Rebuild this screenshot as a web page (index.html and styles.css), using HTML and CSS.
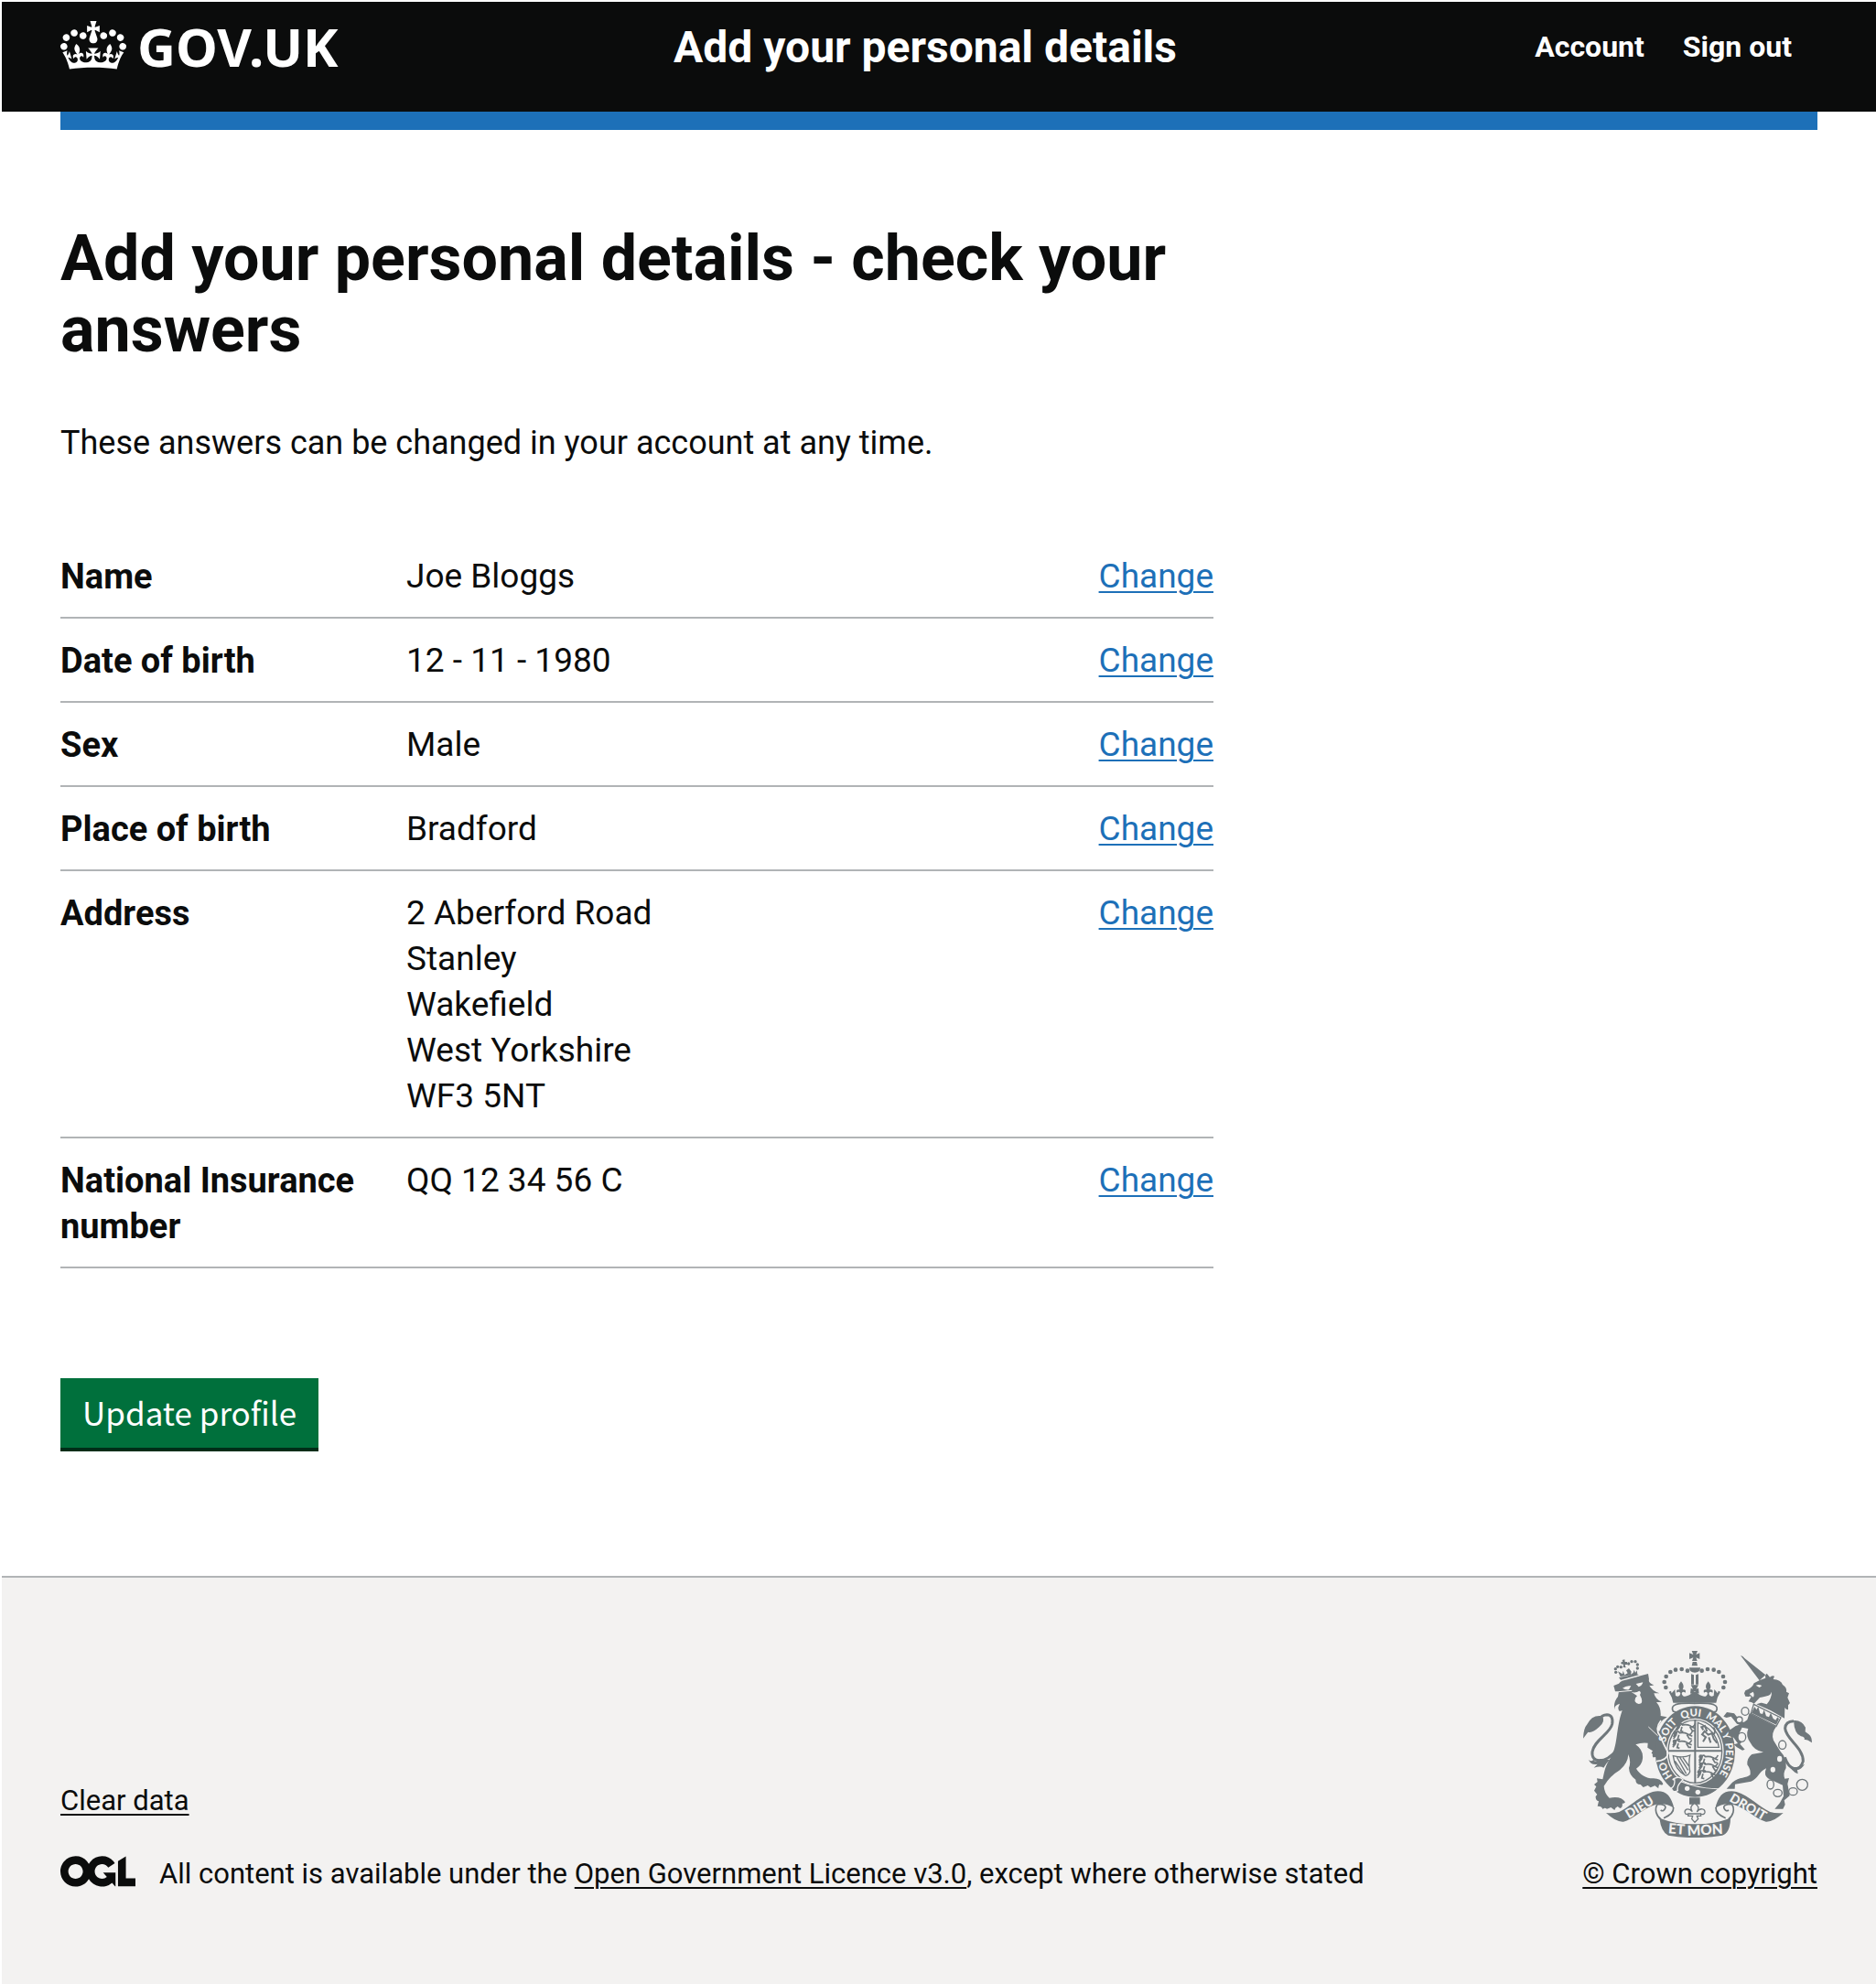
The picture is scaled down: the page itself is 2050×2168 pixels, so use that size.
FILE: index.html
```html
<!DOCTYPE html>
<html lang="en">
<head>
<meta charset="utf-8">
<meta name="viewport" content="width=device-width, initial-scale=1">
<title>Add your personal details - check your answers</title>
<link rel="stylesheet" href="styles.css">
</head>
<body>
<header class="header">
  <div class="container header-grid">
    <a class="logo" href="#">
      <svg class="logo-crown" viewBox="0 0 132 97" aria-hidden="true"><path fill="currentColor" fill-rule="evenodd" d="M25 30.2c3.5 1.5 7.7-.2 9.1-3.7 1.5-3.6-.2-7.8-3.9-9.2-3.6-1.4-7.6.3-9.1 3.9-1.4 3.5.3 7.5 3.9 9zM9 39.5c3.6 1.5 7.8-.2 9.2-3.7 1.5-3.6-.2-7.8-3.9-9.1-3.6-1.5-7.6.2-9.1 3.8-1.4 3.5.3 7.5 3.8 9zM4.4 57.2c3.5 1.5 7.7-.2 9.1-3.8 1.5-3.6-.2-7.7-3.9-9.1-3.5-1.5-7.6.3-9.1 3.8-1.4 3.5.3 7.6 3.9 9.1zm38.3-21.4c3.5 1.5 7.7-.2 9.1-3.8 1.5-3.6-.2-7.7-3.9-9.1-3.6-1.5-7.6.3-9.1 3.8-1.3 3.6.4 7.7 3.9 9.1zm64.4-5.6c-3.6 1.5-7.8-.2-9.1-3.7-1.5-3.6.2-7.8 3.8-9.2 3.6-1.4 7.7.3 9.2 3.9 1.3 3.5-.4 7.5-3.9 9zm15.9 9.3c-3.6 1.5-7.7-.2-9.1-3.7-1.5-3.6.2-7.8 3.7-9.1 3.6-1.5 7.7.2 9.2 3.8 1.5 3.5-.3 7.5-3.8 9zm4.7 17.7c-3.6 1.5-7.8-.2-9.2-3.8-1.5-3.6.2-7.7 3.9-9.1 3.6-1.5 7.7.3 9.2 3.8 1.3 3.5-.4 7.6-3.9 9.1zM89.3 35.8c-3.6 1.5-7.8-.2-9.2-3.8-1.4-3.6.2-7.7 3.9-9.1 3.6-1.5 7.7.3 9.2 3.8 1.4 3.6-.3 7.7-3.9 9.1zM69.7 17.7l8.9 4.7V9.3l-8.9 2.8c-.2-.3-.5-.6-.9-.9L72.4 0H59.6l3.5 11.2c-.3.3-.6.5-.9.9l-8.8-2.8v13.1l8.8-4.7c.3.3.6.7.9.9l-5 15.4v.1c-.2.8-.4 1.6-.4 2.4 0 4.1 3.1 7.5 7 8.1h.2c.3 0 .7.1 1 .1.4 0 .7 0 1-.1h.2c4-.6 7.1-4.1 7.1-8.1 0-.8-.1-1.7-.4-2.4V34l-5.1-15.4c.4-.2.7-.6 1-.9zM66 92.8c16.9 0 32.8 1.1 47.1 3.2 4-16.9 8.9-26.7 14-33.5l-9.6-3.4c1 4.9 1.1 7.2 0 10.2-1.5-1.4-3-4.3-4.2-8.7L108.6 76c2.8-2 5-3.2 7.5-3.3-4.4 9.4-10 11.9-13.6 11.2-4.3-.8-6.3-4.6-5.6-7.9 1-4.7 5.7-5.9 8-.5 4.3-8.7-3-11.4-7.6-8.8 7.1-7.2 7.9-13.5 2.1-21.1-8 6.1-8.1 12.3-4.5 20.8-4.7-5.4-12.1-2.5-9.5 6.2 3.4-5.2 7.9-2 7.2 3.1-.6 4.3-6.4 7.8-13.5 7.2-10.3-.9-10.9-8-11.2-13.8 2.5-.5 7.1 1.8 11 7.3L80.2 60c-4.1 4.4-8 5.3-12.3 5.4 1.4-4.4 8-11.6 8-11.6H55.5s6.4 7.2 7.9 11.6c-4.2-.1-8-1-12.3-5.4l1.4 16.4c3.9-5.5 8.5-7.7 10.9-7.3-.3 5.8-.9 12.8-11.1 13.8-7.2.6-12.9-2.9-13.5-7.2-.7-5 3.8-8.3 7.1-3.1 2.7-8.7-4.6-11.6-9.4-6.2 3.7-8.5 3.6-14.7-4.6-20.8-5.8 7.6-5 13.9 2.2 21.1-4.7-2.6-11.9.1-7.7 8.8 2.3-5.5 7.1-4.2 8.1.5.7 3.3-1.3 7.1-5.7 7.9-3.5.7-9-1.8-13.5-11.2 2.5.1 4.7 1.3 7.5 3.3l-4.7-15.4c-1.2 4.4-2.7 7.2-4.3 8.7-1.1-3-.9-5.3 0-10.2l-9.5 3.4c5 6.9 9.9 16.7 14 33.5 14.8-2.1 30.8-3.2 47.7-3.2z"/></svg>
      <span>GOV.UK</span>
    </a>
    <a class="service-name" href="#">Add your personal details</a>
    <nav class="header-nav" aria-label="Account">
      <a href="#">Account</a>
      <a href="#">Sign out</a>
    </nav>
  </div>
</header>
<div class="container"><div class="header-bar"></div></div>

<main class="container main">
  <div class="two-thirds">
    <h1>Add your personal details - check your answers</h1>
    <p class="intro">These answers can be changed in your account at any time.</p>
    <dl class="summary">
      <div class="row"><dt>Name</dt><dd>Joe Bloggs</dd><dd class="action"><a href="#" aria-label="Change name">Change</a></dd></div>
      <div class="row"><dt>Date of birth</dt><dd>12 - 11 - 1980</dd><dd class="action"><a href="#" aria-label="Change date of birth">Change</a></dd></div>
      <div class="row"><dt>Sex</dt><dd>Male</dd><dd class="action"><a href="#" aria-label="Change sex">Change</a></dd></div>
      <div class="row"><dt>Place of birth</dt><dd>Bradford</dd><dd class="action"><a href="#" aria-label="Change place of birth">Change</a></dd></div>
      <div class="row"><dt>Address</dt><dd>2 Aberford Road<br>Stanley<br>Wakefield<br>West Yorkshire<br>WF3 5NT</dd><dd class="action"><a href="#" aria-label="Change address">Change</a></dd></div>
      <div class="row"><dt>National Insurance number</dt><dd>QQ 12 34 56 C</dd><dd class="action"><a href="#" aria-label="Change National Insurance number">Change</a></dd></div>
    </dl>
    <button class="button" type="submit">Update profile</button>
  </div>
</main>

<footer class="footer">
  <div class="container footer-row">
    <div class="footer-meta">
      <a href="#">Clear data</a>
      <div class="licence">
        <svg class="ogl" viewBox="0 0 483 196" role="img" aria-label="OGL"><path fill="currentColor" d="M421.5 142.8V.1l-50.7 32.3v161.1h112.4v-50.7zm-122.3-9.6A47.12 47.12 0 0 1 221 97.8c0-26 21.1-47.1 47.1-47.1 16.7 0 31.4 8.7 39.7 21.8l42.7-27.2A97.63 97.63 0 0 0 268.1 0c-36.5 0-68.3 20.1-85.1 49.7A98 98 0 0 0 97.8 0C43.9 0 0 43.9 0 97.8s43.9 97.8 97.8 97.8c36.5 0 68.3-20.1 85.1-49.7a97.76 97.76 0 0 0 149.6 25.4l19.4 22.2h3v-87.8h-80l24.3 27.5zM97.8 145c-26 0-47.1-21.1-47.1-47.1s21.1-47.1 47.1-47.1 47.1 21.1 47.1 47.1S123.8 145 97.8 145"/></svg>
        <span>All content is available under the <a href="#">Open Government Licence v3.0</a>, except where otherwise stated</span>
      </div>
    </div>
    <div class="copyright">
      <svg class="arms" viewBox="90 72 750 612" aria-hidden="true">
        <defs>
          <path id="garter" d="M457 520A101 117 0 0 1 457 286A101 117 0 0 1 457 520"/>
          <g id="half-crown">
            <circle cx="432" cy="137" r="7"/><circle cx="413" cy="132" r="7"/><circle cx="393" cy="134" r="7"/><circle cx="376" cy="141" r="7"/><circle cx="362" cy="156" r="7"/><circle cx="356" cy="174" r="7"/><circle cx="361" cy="192" r="7"/>
            <path d="M456 205L441 212L443 194L450 197L443 184H456ZM371 206L378 203L380 211L391 198L393 219Q405 226 409 212Q407 202 397 209Q393 197 406 199Q398 187 411 172Q424 187 416 199Q429 197 425 209Q415 202 413 212Q417 226 432 219Q445 215 447 207H456V242H385Q383 225 371 206Z"/>
            <path class="line" d="M456 244Q415 242 393 248Q377 254 385 270L395 273" stroke-width="5"/>
          </g>
          <g id="lion-passant">
            <path class="line" d="M8 22L16 8Q24 0 28 9Q42 6 54 12Q62 20 70 4M18 14L8 28M26 15L22 29L30 31M52 15L60 28L68 28M56 14L70 20" stroke-width="5"/><circle cx="14" cy="9" r="7"/>
          </g>
          <g id="ribbon">
            <path d="M165 603Q190 605 208 600C245 582 275 548 318 534Q350 527 369 545Q383 563 388 588Q368 571 334 574C285 587 258 623 222 632Q198 634 165 603Z"/>
            <path class="line" d="M386 585Q388 606 354 620M334 574C350 574 365 578 358 590Q353 600 344 594M334 574C322 591 330 613 345 624" stroke-width="5"/>
          </g>
        </defs>
        <!-- lion -->
        <path d="M190 186L207 179Q215 169 235 166L280 153L303 147L306 165Q302 177 322 184Q314 187 307 185Q315 202 340 211L322 211Q326 230 348 240L330 240Q346 258 344 285L365 289Q340 303 333 330Q350 345 353 372Q367 400 361 420Q365 430 353 424Q345 420 338 432Q334 421 325 420Q315 425 318 410Q310 410 318 400L301 389L302 374Q282 371 262 379Q288 397 285 425Q283 445 264 458C275 477 298 490 318 490Q345 489 352 508Q350 515 341 509Q336 515 337 523L325 514L311 520L302 513L287 519L278 510Q262 510 262 494Q241 480 240 456Q248 435 238 411Q237 440 210 463Q178 482 158 515Q159 538 176 554Q214 546 228 568Q222 574 218 572Q221 585 211 588L203 582Q194 586 193 594L181 585L168 590Q160 584 155 591Q150 580 137 581L141 565Q130 561 131 549L136 543L126 530L133 517L126 510L137 501L135 490L154 493C160 466 162 450 178 425C205 385 196 330 218 267Q205 275 205 257L210 245Q190 250 193 267Q188 240 204 222L207 205H195Z"/>
        <path class="line" d="M199 398C160 445 115 438 120 403C125 365 179 343 185 312Q190 282 168 281Q151 282 145 294" stroke-width="9"/>
        <path d="M90 359Q91 326 103 313Q119 280 153 286Q164 305 142 322Q119 343 106 338ZM108 428Q116 437 124 428Q132 442 145 426L177 429Q164 442 157 455Q147 448 125 455L137 443Q114 447 108 428Z"/>
        <g class="cut"><path d="M219 194Q232 185 247 187L240 199Q229 201 219 194ZM263 180L286 175Q283 187 272 190ZM248 207Q263 211 274 203Q282 207 276 216Q287 236 280 244Q267 250 260 238Q258 226 267 220Q260 214 248 207Z"/></g>
        <path class="gap" d="M304 321L348 363M206 206L250 202M213 167L273 153" stroke-width="3"/>
        <path d="M207 159L266 148L273 151L213 167ZM212 156L204 139L219 148L221 137L226 151L236 145L231 136L240 129L248 140L246 149L254 144L257 134L261 144L266 136L268 148Z"/>
        <circle cx="197" cy="142" r="5"/><circle cx="196" cy="131" r="5"/><circle cx="203" cy="124" r="5"/><circle cx="214" cy="125" r="5"/><circle cx="239" cy="114" r="5"/><circle cx="249" cy="107" r="5"/><circle cx="261" cy="107" r="5"/><circle cx="268" cy="117" r="5"/><circle cx="268" cy="129" r="5"/>
        <path d="M218 102L226 100L227 108L234 108L234 117L227 117L230 127L221 126L222 116L214 115L215 107L220 109Z"/>
        <!-- imperial crown -->
        <use href="#half-crown"/><use href="#half-crown" transform="matrix(-1 0 0 1 911 0)"/>
        <path d="M446 72H465L460 84L472 79V99L460 94L464 105H447L451 94L438 99V79L451 84ZM449 108H462L465 121H446ZM438 127H474Q474 143 456 143Q438 143 438 127ZM444 148L453 151V182H444ZM459 151L468 148V182H459Z"/>
        <!-- garter -->
        <ellipse cx="457" cy="402" rx="131" ry="149"/>
        <ellipse class="cut" cx="457" cy="402" rx="94" ry="109"/>
        <ellipse class="line" cx="457" cy="402" rx="88" ry="103" stroke-width="4"/>
        <path class="line" d="M457 299V505M369 400H545" stroke-width="6"/>
        <path class="line" d="M466 307V388H535Q525 330 466 307Z" stroke-width="4"/>
        <path class="line" d="M483 370L492 355L480 346L488 335L500 347L512 342L518 360L529 374M502 355L508 373M484 331L478 322L489 318L496 336M515 346Q528 340 517 323" stroke-width="6"/>
        <use href="#lion-passant" x="376" y="360"/><use href="#lion-passant" x="378" y="332"/><use href="#lion-passant" x="388" y="306"/>
        <use href="#lion-passant" x="462" y="410"/><use href="#lion-passant" x="462" y="435"/><use href="#lion-passant" x="457" y="460"/>
        <path class="line" d="M385 416Q420 424 440 414Q435 438 440 468Q433 483 424 480Q390 460 385 416ZM397 420L428 475M407 421L434 463M417 422L437 450M391 433L422 478" stroke-width="4"/>
        <g class="lettering" font-size="34">
          <text><textPath href="#garter" startOffset="86">HO</textPath></text>
          <text><textPath href="#garter" startOffset="202">SOIT</textPath></text>
          <text><textPath href="#garter" startOffset="298">QUI</textPath></text>
          <text><textPath href="#garter" startOffset="376">MAL</textPath></text>
          <text><textPath href="#garter" startOffset="453">Y</textPath></text>
          <text><textPath href="#garter" startOffset="486">PENSE</textPath></text>
        </g>
        <path class="gap" d="M383 492C425 508 477 527 535 526M374 534L391 528" stroke-width="6"/>
        <path d="M390 488Q407 480 417 494L410 502Q455 522 530 526Q495 550 455 549Q415 543 397 530Q379 536 379 519Q393 514 387 505Z"/>
        <path class="gap" d="M389 490Q407 482 417 494L407 505Q397 517 400 530Q384 539 379 522Q393 514 389 490Z" stroke-width="4"/>
        <circle class="cut" cx="431" cy="523" r="8"/><circle class="cut" cx="466" cy="535" r="8"/>
        <path class="gap" d="M345 300Q323 328 343 352Q354 379 369 407Q364 432 330 434" stroke-width="5"/>
        <!-- unicorn -->
        <path d="M606 87Q614 89 619 96L688 151L668 169ZM618 211L622 202Q645 193 650 178Q669 166 688 161Q685 151 692 146L702 158Q712 151 717 155L713 165Q738 167 744 183Q759 193 756 206L765 211L760 225L768 243L762 250V265Q755 265 751 258L750 293L704 267L658 247Q689 239 709 214Q685 224 669 225L650 245L643 241L632 238L641 223Q638 218 632 222L622 221Z"/>
        <path class="cut" d="M656 185Q666 180 676 186L668 192ZM635 213L647 206Q653 216 647 224ZM667 240Q700 226 708 206Q707 230 692 247Z"/>
        <path class="line" d="M649 247L738 291L723 319L640 277Z" stroke-width="4"/>
        <path d="M652 255L658 265L664 255L670 277L678 279L683 265L690 286L699 289L705 275L713 294L721 299L727 289L732 295L723 314L642 275Z"/>
        <path d="M635 276L723 320Q705 342 714 365Q724 382 737 402Q757 422 755 456Q744 474 751 491L765 489L760 508L767 547L749 562L752 576L745 590H718L735 570L747 548L744 512Q716 500 696 490Q681 480 690 457C664 469 665 490 640 500L588 509L587 524H560L579 503C602 485 625 490 638 478Q640 461 628 445Q626 424 643 411L681 404Q650 398 639 374Q621 351 631 327L611 323L602 342L621 359L604 377L620 395L612 398L594 388L584 379L597 375L583 356L567 350L565 335L590 318L609 312L628 298Z"/>
        <path d="M550 287L561 273L585 277L606 303L622 307L614 319L594 311L575 287L560 291Z"/>
        <path class="line" d="M751 421C766 467 800 469 811 434C813 390 754 361 752 326Q753 303 780 302" stroke-width="9"/>
        <path d="M780 300Q807 298 819 323L818 337L830 346Q840 354 840 373Q824 361 815 363Q819 355 804 352Q782 344 780 300ZM763 443Q780 463 816 443Q806 461 792 462L794 475Q773 467 763 443Z"/>
        <g class="links"><ellipse cx="621" cy="270" rx="12" ry="13"/><ellipse cx="602" cy="298" rx="10" ry="10"/><ellipse cx="610" cy="355" rx="13" ry="15"/><ellipse cx="743" cy="380" rx="12" ry="14"/><ellipse cx="704" cy="510" rx="11" ry="15"/><ellipse cx="728" cy="538" rx="14" ry="12"/><ellipse cx="778" cy="533" rx="14" ry="12"/><circle cx="808" cy="511" r="18"/></g>
        <ellipse class="cut" cx="734" cy="426" rx="8" ry="10"/><ellipse class="cut" cx="712" cy="461" rx="8" ry="9"/>
        <!-- motto and fleur-de-lis -->
        <use href="#ribbon"/><use href="#ribbon" transform="matrix(-1 0 0 1 911 0)"/>
        <path d="M340 620Q394 641 456 640Q516 641 573 620Q572 668 546 677Q455 692 369 677Q346 666 340 620ZM438 553H473V575H438Z"/>
        <path class="outline" d="M455 571C470 580 471 589 463 600C473 585 491 589 489 602Q485 611 476 606V613H463L467 623L456 634L446 623L449 613H434V606Q425 611 423 600C424 587 440 588 448 599C440 587 442 580 455 571ZM434 606H476" stroke-width="4"/>
        <g class="lettering" text-anchor="middle">
          <text font-size="42" transform="translate(282 597) rotate(-31)">DIEU</text>
          <text font-size="42" transform="translate(624 596) rotate(30)">DROIT</text>
          <text font-size="46" transform="translate(395 672) rotate(4)">ET</text>
          <text font-size="46" transform="translate(490 675) rotate(-3)">MON</text>
        </g>
      </svg>
      <a href="#">© Crown copyright</a>
    </div>
  </div>
</footer>
</body>
</html>
```
FILE: styles.css
```css
* { box-sizing: border-box; }

body {
  margin: 0;
  padding: 2px 0 0 2px;
  background: #fff;
  color: #0b0c0c;
  font: 400 37px/50px Roboto, "Liberation Sans", sans-serif;
}

a {
  color: inherit;
  text-decoration: underline;
  text-decoration-thickness: 2px;
  text-underline-offset: 4px;
}

.container { margin: 0 64px; }

/* Header */
.header { background: #0b0c0c; color: #fff; }
.header a { text-decoration: none; }
.header-grid {
  display: grid;
  grid-template-columns: repeat(3, 1fr);
  align-items: start;
  padding: 21px 0 39px;
  min-height: 120px;
}
.logo {
  display: flex;
  gap: 12px;
  font: 700 58px/56px "Noto Sans", sans-serif;
}
.logo-crown { width: 72px; height: 53px; }
.service-name {
  padding-left: 30px;
  font-size: 48px;
  font-weight: 700;
  line-height: 58px;
  white-space: nowrap;
}
.header-nav {
  display: flex;
  justify-content: flex-end;
  gap: 42px;
  padding: 8px 28px 0 0;
  font-size: 32px;
  font-weight: 700;
  line-height: 40px;
}
.header-bar { height: 20px; background: #1d70b8; }

/* Main */
.main { padding: 101px 0 136px; }
.two-thirds { width: 66.6667%; padding-right: 20px; }
h1 {
  margin: 0 0 60px;
  font-size: 70px;
  font-weight: 700;
  line-height: 78px;
}
.intro { margin: 0 0 75px; font-size: 36px; }

.summary { margin: 0 0 120px; }
.row {
  display: grid;
  grid-template-columns: 30% 50% 20%;
  padding: 21px 0 19px;
  border-bottom: 2px solid #b1b4b6;
}
dt { padding-right: 40px; font-size: 38px; font-weight: 700; }
dd { margin: 0; }
.action { text-align: right; color: #1d70b8; }

.button {
  display: block;
  margin: 0 0 4px;
  padding: 12px 24px 14px;
  border: 0;
  background: #00703c;
  box-shadow: 0 4px 0 #002d18;
  color: #fff;
  font: 400 35px/50px "Noto Sans CJK SC", "Noto Sans", sans-serif;
}

/* Footer */
.footer {
  padding: 80px 0 100px;
  border-top: 2px solid #b1b4b6;
  background: #f3f2f1;
  font-size: 31px;
  line-height: 40px;
}
.footer-row {
  display: flex;
  justify-content: space-between;
  align-items: flex-end;
}
.footer-meta {
  display: flex;
  flex-direction: column;
  align-items: flex-start;
  gap: 40px;
}
.licence { display: flex; gap: 26px; }
.ogl { width: 82px; height: 34px; flex: none; }
.copyright {
  display: flex;
  flex-direction: column;
  align-items: flex-end;
  gap: 20px;
}
.arms { width: 250px; height: 204px; margin-right: 6px; fill: #6f777b; }
.arms .line { fill: none; stroke: #6f777b; }
.arms .gap { fill: none; stroke: #f3f2f1; }
.arms .cut { fill: #f3f2f1; }
.arms .outline { fill: #f3f2f1; stroke: #6f777b; }
.arms .links { fill: #f3f2f1; stroke: #6f777b; stroke-width: 4px; }
.lettering { fill: #f3f2f1; font-family: Lato, sans-serif; font-weight: 900; }
```
